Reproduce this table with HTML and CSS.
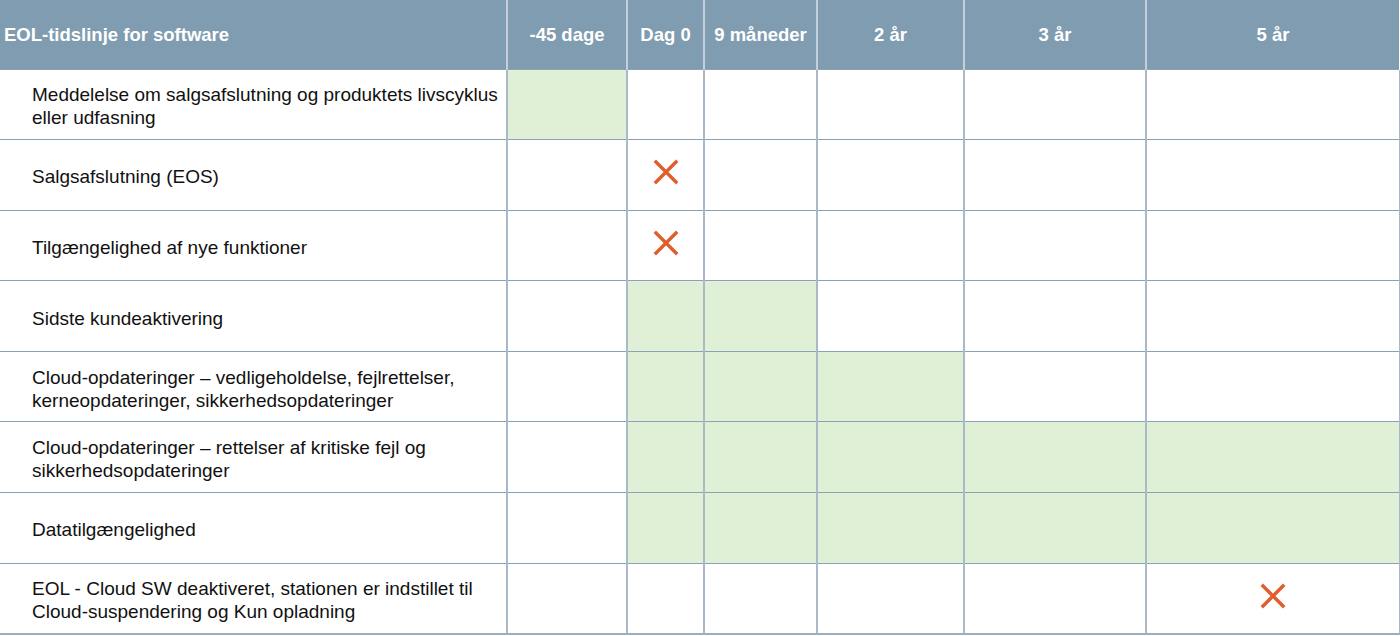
FILE: index.html
```html
<!DOCTYPE html>
<html lang="da">
<head>
<meta charset="utf-8">
<title>EOL-tidslinje for software</title>
<link rel="stylesheet" href="styles.css">
</head>
<body>
<table class="eol">
  <colgroup>
    <col class="c-label">
    <col class="c-45">
    <col class="c-d0">
    <col class="c-9m">
    <col class="c-2y">
    <col class="c-3y">
    <col class="c-5y">
  </colgroup>
  <thead>
    <tr>
      <th class="title">EOL-tidslinje for software</th>
      <th>-45 dage</th>
      <th>Dag 0</th>
      <th>9 måneder</th>
      <th>2 år</th>
      <th>3 år</th>
      <th>5 år</th>
    </tr>
  </thead>
  <tbody>
    <tr>
      <td class="label">Meddelelse om salgsafslutning og produktets livscyklus eller udfasning</td>
      <td class="on"></td><td></td><td></td><td></td><td></td><td></td>
    </tr>
    <tr>
      <td class="label">Salgsafslutning (EOS)</td>
      <td></td>
      <td class="mark"><svg class="x" viewBox="0 0 26 26" width="26" height="26"><path d="M3 3 L23 23 M23 3 L3 23"/></svg></td>
      <td></td><td></td><td></td><td></td>
    </tr>
    <tr>
      <td class="label">Tilgængelighed af nye funktioner</td>
      <td></td>
      <td class="mark"><svg class="x" viewBox="0 0 26 26" width="26" height="26"><path d="M3 3 L23 23 M23 3 L3 23"/></svg></td>
      <td></td><td></td><td></td><td></td>
    </tr>
    <tr>
      <td class="label">Sidste kundeaktivering</td>
      <td></td><td class="on"></td><td class="on"></td><td></td><td></td><td></td>
    </tr>
    <tr>
      <td class="label">Cloud-opdateringer – vedligeholdelse, fejlrettelser, kerneopdateringer, sikkerhedsopdateringer</td>
      <td></td><td class="on"></td><td class="on"></td><td class="on"></td><td></td><td></td>
    </tr>
    <tr>
      <td class="label">Cloud-opdateringer – rettelser af kritiske fejl og sikkerhedsopdateringer</td>
      <td></td><td class="on"></td><td class="on"></td><td class="on"></td><td class="on"></td><td class="on"></td>
    </tr>
    <tr>
      <td class="label">Datatilgængelighed</td>
      <td></td><td class="on"></td><td class="on"></td><td class="on"></td><td class="on"></td><td class="on"></td>
    </tr>
    <tr>
      <td class="label">EOL - Cloud SW deaktiveret, stationen er indstillet til Cloud-suspendering og Kun opladning</td>
      <td></td><td></td><td></td><td></td><td></td>
      <td class="mark"><svg class="x" viewBox="0 0 26 26" width="26" height="26"><path d="M3 3 L23 23 M23 3 L3 23"/></svg></td>
    </tr>
  </tbody>
</table>
</body>
</html>
```

FILE: styles.css
```css
html, body {
  margin: 0;
  padding: 0;
  background: #ffffff;
}

body {
  font-family: "Liberation Sans", Arial, Helvetica, sans-serif;
  color: #111111;
}

.eol {
  width: 1400px;
  table-layout: fixed;
  border-collapse: collapse;
}

.c-label { width: 507px; }
.c-45 { width: 120px; }
.c-d0 { width: 77px; }
.c-9m { width: 113px; }
.c-2y { width: 147px; }
.c-3y { width: 182px; }
.c-5y { width: 254px; }

.eol thead tr {
  height: 69px;
}

.eol tbody tr {
  height: 70.6px;
}

.eol thead th {
  padding: 2px 0 0;
  background: #809cb0;
  color: #ffffff;
  font-size: 18.5px;
  font-weight: bold;
  text-align: center;
  vertical-align: middle;
  border-right: 2px solid #c3d0db;
  border-bottom: 1px solid #8aa2b5;
  white-space: nowrap;
}

.eol thead th.title {
  text-align: left;
  padding-left: 4px;
}

.eol thead th:last-child {
  border-right: 2px solid #ffffff;
}

.eol tbody td {
  padding: 0;
  border-right: 2px solid #a9b9c7;
  border-bottom: 1px solid #8aa2b6;
  vertical-align: middle;
}

.eol tbody tr:last-child td {
  border-bottom: 2px solid #9db0c0;
}

.eol tbody td.label {
  padding: 4px 2px 0 32px;
  font-size: 19px;
  line-height: 23px;
  color: #111111;
}

.eol tbody td.on {
  background: #dff0d6;
}

.eol tbody td.mark {
  text-align: center;
}

.x {
  display: block;
  margin: 0 auto 5px;
}

.x path {
  fill: none;
  stroke: #e05d2c;
  stroke-width: 3.4;
  stroke-linecap: square;
}
```
